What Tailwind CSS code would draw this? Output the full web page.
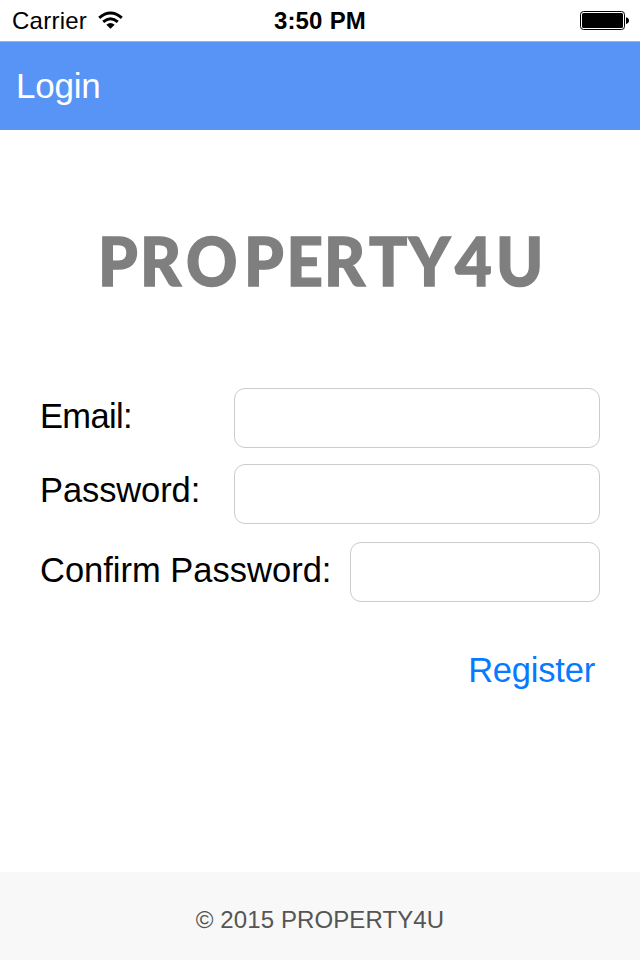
<!DOCTYPE html>
<html lang="en">
<head>
<meta charset="utf-8">
<title>Register</title>
<script src="https://cdn.jsdelivr.net/npm/@tailwindcss/browser@4"></script>
</head>
<body class="flex h-[960px] w-[640px] flex-col overflow-hidden bg-white font-['Liberation_Sans',sans-serif] text-black">
  <div class="grid h-[41px] shrink-0 grid-cols-3 items-center pl-3 pr-[10px]">
    <div class="flex items-center gap-[11px]">
      <span class="text-[24px] leading-[41px] tracking-[0.25px]">Carrier</span>
      <svg class="mb-[2px] h-[18px] w-[25px]" viewBox="0 0 25 18" fill="none" stroke="#000" stroke-width="3">
        <path d="M1.2 6.8Q12.5 -2.8 23.8 6.8"/>
        <path d="M5.2 10.8Q12.5 4.6 19.8 10.8"/>
        <path d="M8.3 13.7Q12.5 10.4 16.7 13.7L12.5 17.8Z" fill="#000" stroke="none"/>
      </svg>
    </div>
    <div class="pr-[2px] text-center text-[24px] font-bold leading-[41px] tracking-[0.1px] [word-spacing:0.5px]">3:50 PM</div>
    <svg class="h-5 w-[50px] justify-self-end" viewBox="0 0 50 20">
      <rect x=".5" y=".5" width="44" height="18" rx="3" fill="none" stroke="#000" stroke-width="1"/>
      <rect x="2" y="2" width="41" height="15" rx="1.5"/>
      <path d="M46 6.2Q49 7 49 9.6T46 13Z"/>
    </svg>
  </div>
  <header class="flex h-[89px] shrink-0 items-center border-t border-[#b2b2b2] bg-[#5794f6] px-4 pt-[1px] text-[35px] tracking-[-0.25px] text-white">Login</header>
  <main class="flex grow flex-col">
    <svg class="mt-[75px] h-[112px] w-full shrink-0" viewBox="0 0 640 112" role="img" aria-label="PROPERTY4U">
      <text transform="scale(.94 1)" y="80.6" x="104.3 148.9 197.9 259.6 304.8 344.7 392.6 434.6 484 527.7" font-family="Lato, sans-serif" font-weight="900" font-size="67.5" fill="#7f7f7f" stroke="#7f7f7f" stroke-width="1.4">PROPERTY4U</text>
    </svg>
    <form class="mt-[71px] flex flex-col px-10 text-[34.5px] leading-[58px]">
      <div class="flex h-[60px] justify-between">
        <label for="email" class="-mt-[1px] tracking-[-0.65px]">Email:</label>
        <input id="email" type="email" class="h-[60px] w-[366px] rounded-[11px] border border-[#cccccc] bg-white px-3">
      </div>
      <div class="mt-4 flex h-[60px] justify-between">
        <label for="password" class="-mt-[3px] tracking-[-0.1px]">Password:</label>
        <input id="password" type="password" class="h-[60px] w-[366px] rounded-[11px] border border-[#cccccc] bg-white px-3">
      </div>
      <div class="mt-[18px] flex h-[60px] justify-between">
        <label for="confirm" class="-mt-[1px] whitespace-nowrap">Confirm Password:</label>
        <input id="confirm" type="password" class="h-[60px] w-[250px] rounded-[11px] border border-[#cccccc] bg-white px-3">
      </div>
      <button type="button" class="mr-[5px] mt-[39px] self-end tracking-[-0.2px] text-[#087aff]">Register</button>
    </form>
  </main>
  <footer class="flex h-[88px] shrink-0 items-center justify-center bg-[#f8f8f8] pt-[8px] text-[24px] tracking-[0.1px] text-[#555555]">© 2015 PROPERTY4U</footer>
</body>
</html>
